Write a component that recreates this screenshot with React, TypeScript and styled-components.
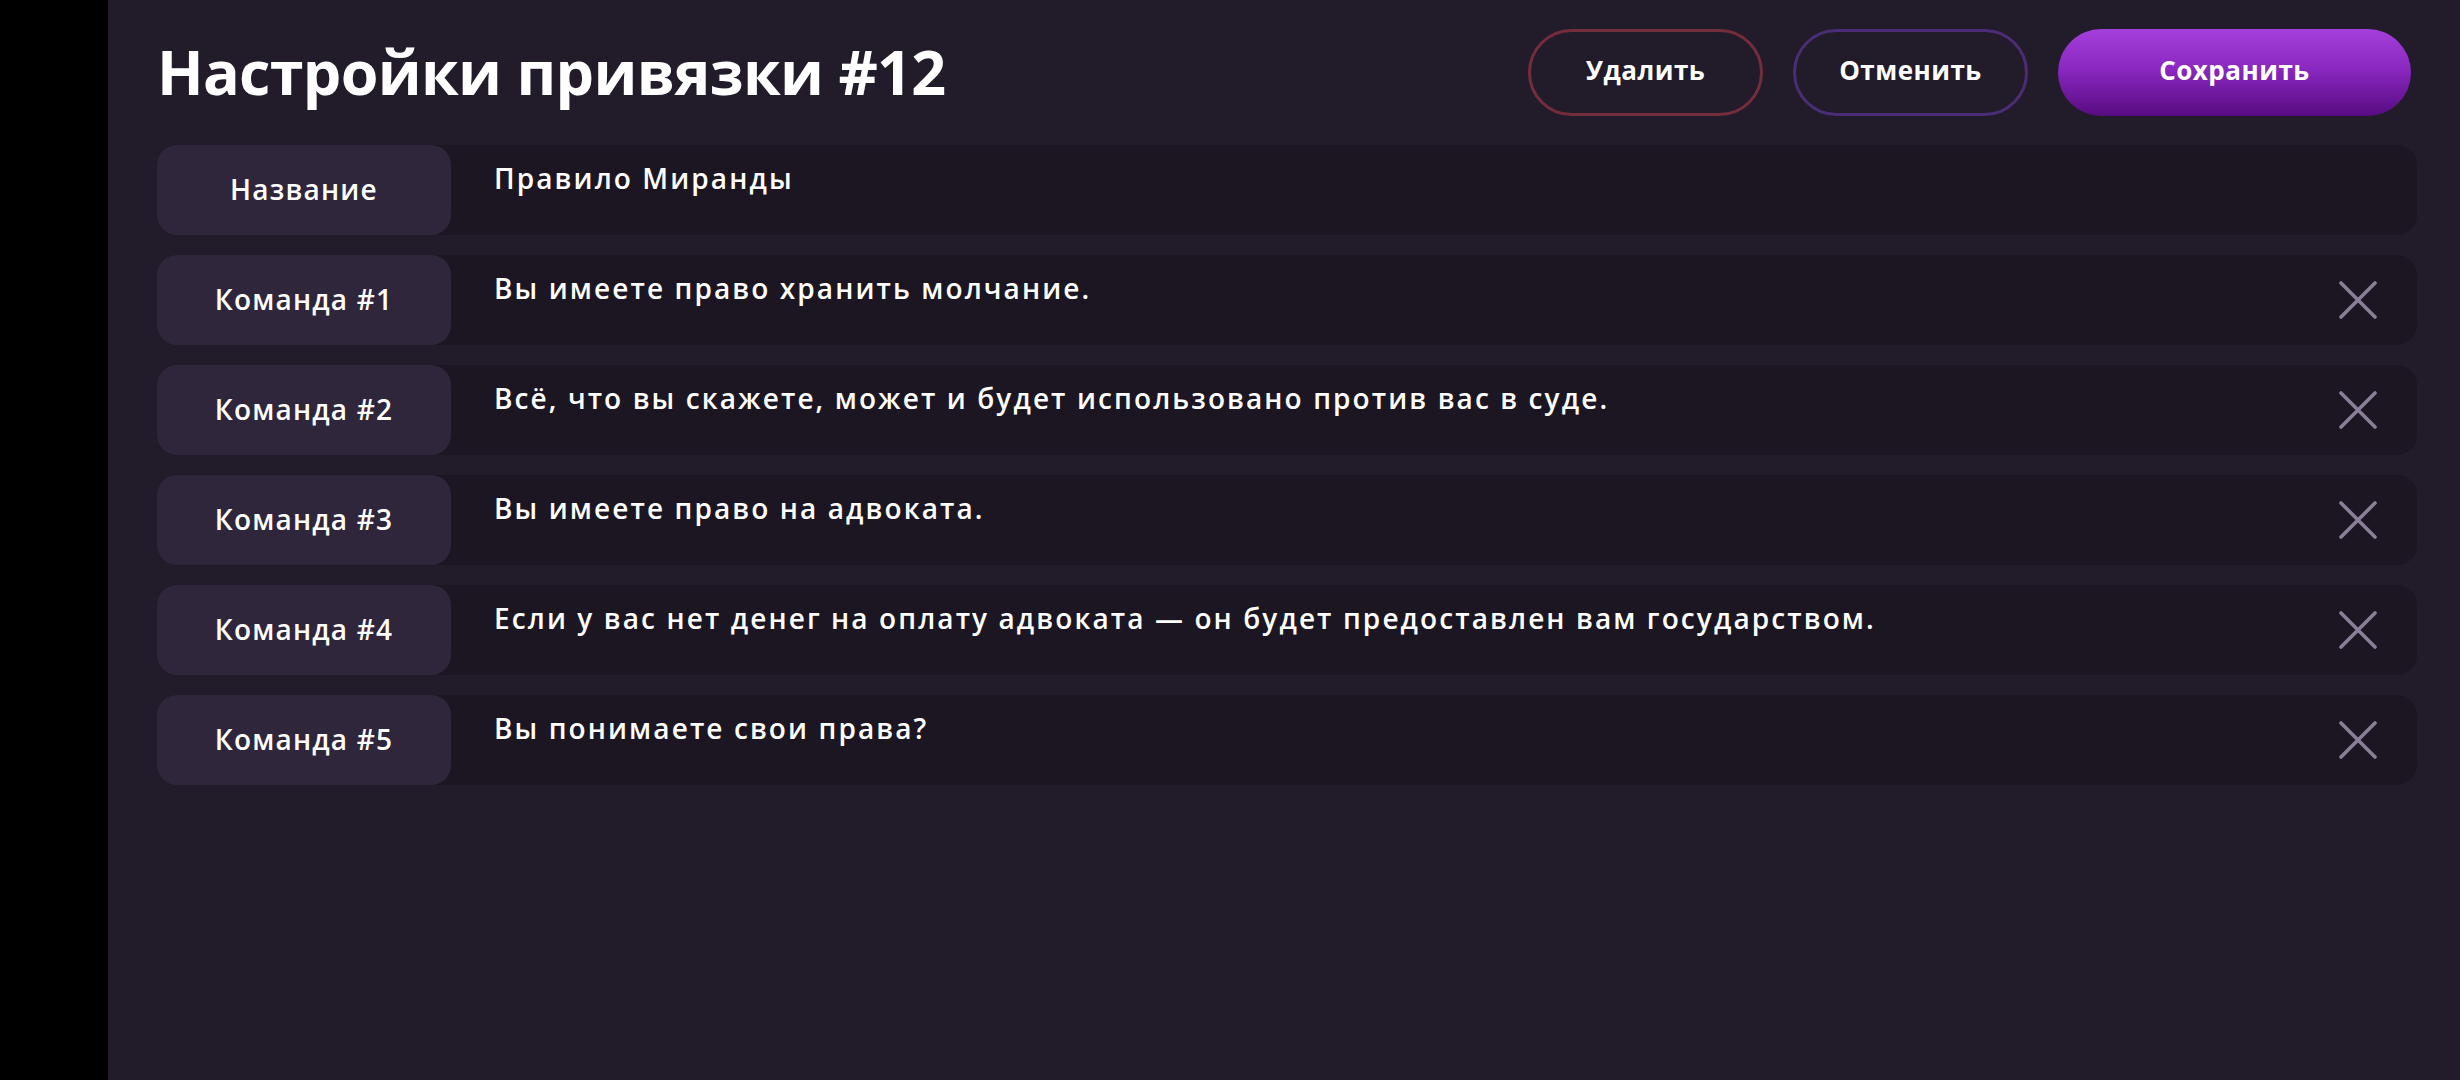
import * as React from 'react';
import styled, { createGlobalStyle } from 'styled-components';

const GlobalStyle = createGlobalStyle`
  html, body {
    margin: 0;
    padding: 0;
    background: #000;
  }
  * {
    box-sizing: border-box;
  }
`;

type Command = {
    label: string;
    text: string;
    removable: boolean;
};

const rows: Command[] = [
    { label: 'Название', text: 'Правило Миранды', removable: false },
    { label: 'Команда #1', text: 'Вы имеете право хранить молчание.', removable: true },
    { label: 'Команда #2', text: 'Всё, что вы скажете, может и будет использовано против вас в суде.', removable: true },
    { label: 'Команда #3', text: 'Вы имеете право на адвоката.', removable: true },
    { label: 'Команда #4', text: 'Если у вас нет денег на оплату адвоката — он будет предоставлен вам государством.', removable: true },
    { label: 'Команда #5', text: 'Вы понимаете свои права?', removable: true },
];

const CloseIcon = () => (
    <svg width="38" height="38" viewBox="0 0 38 38" fill="none">
        <path d="M2 2 L36 36 M36 2 L2 36" stroke="#8a7f96" strokeWidth="3.6" strokeLinecap="round" />
    </svg>
);

export default function App() {
    return (
        <>
            <GlobalStyle />
            <Shell>
                <Rail />
                <Main>
                    <Header>
                        <Title>Настройки привязки #12</Title>
                        <Actions>
                            <OutlineButton $tone="danger">Удалить</OutlineButton>
                            <OutlineButton $tone="neutral">Отменить</OutlineButton>
                            <SaveButton>Сохранить</SaveButton>
                        </Actions>
                    </Header>
                    <List>
                        {rows.map((row) => (
                            <Row key={row.label}>
                                <Label>{row.label}</Label>
                                <Value>{row.text}</Value>
                                {row.removable && (
                                    <RemoveButton aria-label="Удалить команду">
                                        <CloseIcon />
                                    </RemoveButton>
                                )}
                            </Row>
                        ))}
                    </List>
                </Main>
            </Shell>
        </>
    );
}

const Shell = styled.div`
    display: flex;
    min-height: 100vh;
    font-family: "Open Sans", "Noto Sans", sans-serif;
    color: #fff;
`;

const Rail = styled.div`
    width: 108px;
    flex-shrink: 0;
    background: #000;
`;

const Main = styled.main`
    flex: 1;
    background: #221b2a;
    padding: 29px 43px 0 49px;
`;

const Header = styled.div`
    display: flex;
    align-items: center;
    justify-content: space-between;
    height: 87px;
    padding-right: 6px;
    margin-bottom: 29px;
`;

const Title = styled.h1`
    margin: 0;
    font-size: 61px;
    font-weight: 700;
    letter-spacing: -0.7px;
    line-height: 1;
    padding-bottom: 2px;
`;

const Actions = styled.div`
    display: flex;
    gap: 30px;
`;

const OutlineButton = styled.button<{ $tone: 'danger' | 'neutral' }>`
    width: 235px;
    height: 87px;
    border-radius: 44px;
    background: transparent;
    border: 3px solid ${(p) => (p.$tone === 'danger' ? '#742d3b' : '#4b2d77')};
    color: #fff;
    font-family: inherit;
    font-size: 26px;
    font-weight: 700;
    letter-spacing: 0.5px;
    padding: 0 0 5px;
    cursor: pointer;
`;

const SaveButton = styled.button`
    width: 353px;
    height: 87px;
    border-radius: 44px;
    border: none;
    background: linear-gradient(180deg, #a53fdb 0%, #8a28c0 45%, #580b82 100%);
    color: #fff;
    font-family: inherit;
    font-size: 26px;
    font-weight: 700;
    letter-spacing: 0.5px;
    padding: 0 0 5px;
    cursor: pointer;
`;

const List = styled.div`
    display: flex;
    flex-direction: column;
    gap: 20px;
`;

const Row = styled.div`
    display: flex;
    align-items: stretch;
    height: 90px;
    background: #1c1622;
    border-radius: 20px;
`;

const Label = styled.div`
    width: 294px;
    flex-shrink: 0;
    display: flex;
    align-items: center;
    justify-content: center;
    background: #30263b;
    border-radius: 20px;
    font-size: 28px;
    font-weight: 600;
    letter-spacing: 1.2px;
    padding-bottom: 2px;
`;

const Value = styled.div`
    flex: 1;
    padding: 15px 0 0 43px;
    font-size: 28px;
    font-weight: 600;
    letter-spacing: 2.1px;
    line-height: 1.3;
`;

const RemoveButton = styled.button`
    align-self: center;
    margin-right: 40px;
    padding: 0;
    background: none;
    border: none;
    display: flex;
    cursor: pointer;
`;
